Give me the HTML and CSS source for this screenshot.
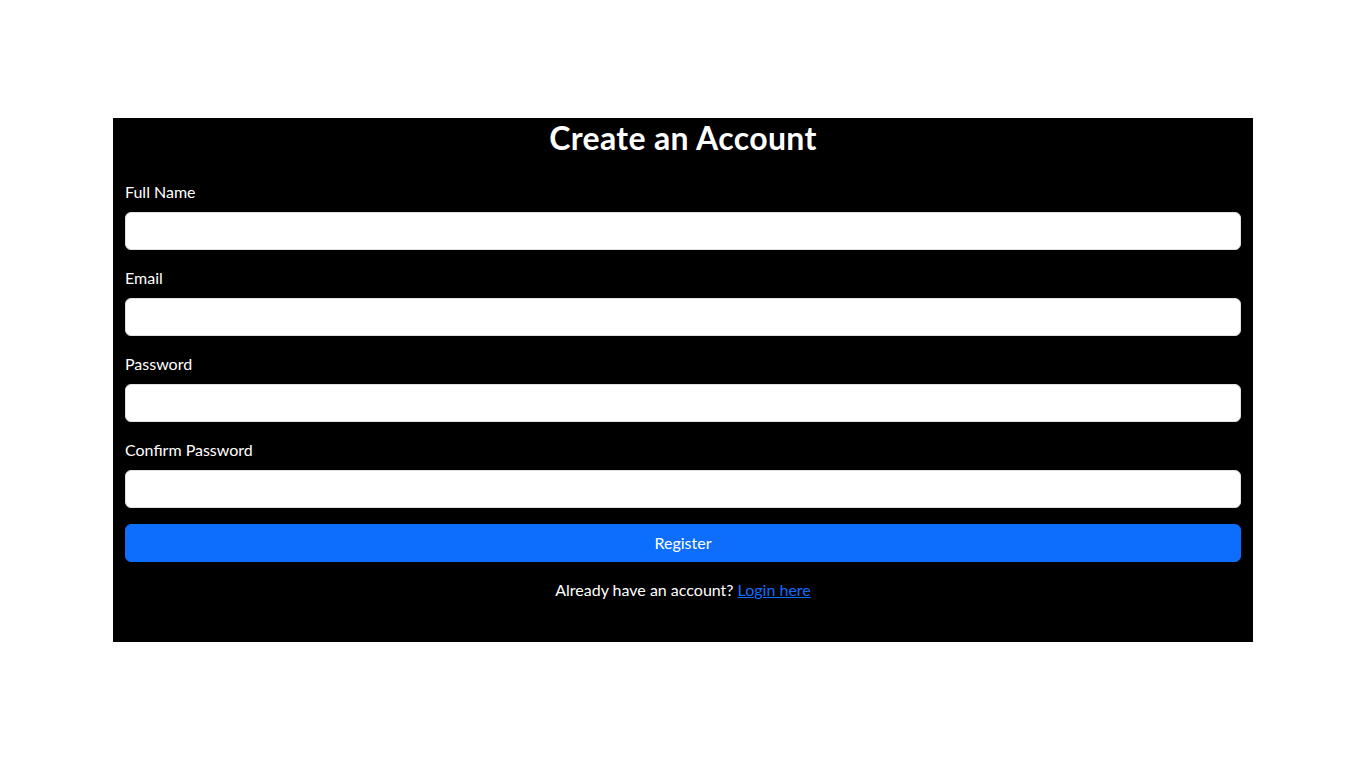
FILE: index.html
```html
<!DOCTYPE html>
<html lang="en">
<head>
<meta charset="utf-8">
<title>Register</title>
<link rel="stylesheet" href="styles.css">
</head>
<body>
<div class="container">
  <h2 class="title">Create an Account</h2>
  <form class="form">
    <div class="field">
      <label class="label" for="name">Full Name</label>
      <input class="input" id="name" type="text">
    </div>
    <div class="field">
      <label class="label" for="email">Email</label>
      <input class="input" id="email" type="email">
    </div>
    <div class="field">
      <label class="label" for="pw">Password</label>
      <input class="input" id="pw" type="password">
    </div>
    <div class="field">
      <label class="label" for="pw2">Confirm Password</label>
      <input class="input" id="pw2" type="password">
    </div>
    <button class="btn" type="button">Register</button>
  </form>
  <p class="footer">Already have an account? <a class="link" href="#">Login here</a></p>
</div>
</body>
</html>
```
FILE: styles.css
```css
* { box-sizing: border-box; }
html, body { margin: 0; padding: 0; background: #fff; }
body {
  font-family: Lato, "Liberation Sans", sans-serif;
  font-size: 16px;
  line-height: 1.5;
  color: #fff;
}
.container {
  width: 1140px;
  margin: 118px auto 0;
  padding: 0 12px 24px;
  background: #000;
}
.title {
  margin: 0 0 24px;
  padding-top: 1px;
  font-size: 32px;
  font-weight: 700;
  line-height: 37.4px;
  letter-spacing: 0.35px;
  text-align: center;
}
.form { display: flex; flex-direction: column; gap: 16px; }
.field { display: flex; flex-direction: column; }
.label { display: block; margin-bottom: 8px; }
.input {
  display: block;
  width: 100%;
  height: 38px;
  padding: 6px 12px;
  font: inherit;
  color: #212529;
  background: #fff;
  border: 1px solid #dee2e6;
  border-radius: 6px;
}
.btn {
  display: block;
  width: 100%;
  height: 38px;
  padding: 6px 12px;
  font: inherit;
  color: #fff;
  background: #0d6efd;
  border: 1px solid #0d6efd;
  border-radius: 6px;
  cursor: pointer;
}
.footer { margin: 16px 0 16px; text-align: center; }
.link { color: #0d6efd; text-decoration: underline; }
```
